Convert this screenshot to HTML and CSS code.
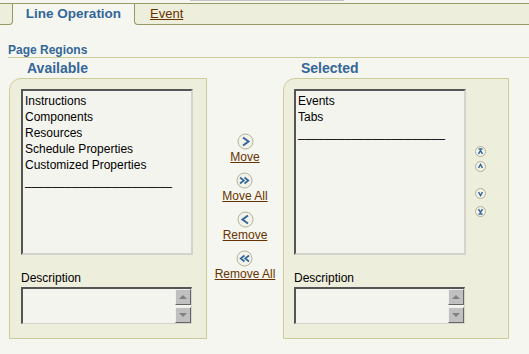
FILE: index.html
```html
<!DOCTYPE html>
<html lang="en">
<head>
    <meta charset="UTF-8">
    <meta name="viewport" content="width=device-width, initial-scale=1.0">
    <title>Line Operation</title>
    <link rel="stylesheet" href="styles.css">
</head>
<body>
    <div class="topline"></div>
    <div class="tabbar">
        <div class="tab-edge"></div>
        <div class="tab tab-active">Line Operation</div>
        <div class="tab tab-rest"><a href="#">Event</a></div>
    </div>

    <div class="content">
        <h2 class="section-title">Page Regions</h2>

        <div class="shuttle">
            <div class="side">
                <h3>Available</h3>
                <div class="panel panel-left">
                    <div class="list-col">
                        <div class="listbox">
                            <div>Instructions</div>
                            <div>Components</div>
                            <div>Resources</div>
                            <div>Schedule Properties</div>
                            <div>Customized Properties</div>
                            <div>______________________</div>
                        </div>
                        <div class="desc-label">Description</div>
                        <div class="desc">
                            <div class="scroll">
                                <span class="sb"><span class="tri-up"></span></span>
                                <span class="sb"><span class="tri-down"></span></span>
                            </div>
                        </div>
                    </div>
                </div>
            </div>

            <div class="moves">
                <div class="move-item">
                    <svg width="17" height="17" viewBox="0 0 17 17"><circle cx="8.5" cy="8.5" r="7.5" class="ring"/><path d="M6 4.5 L11.5 8.5 L6 12.5" class="chev"/></svg>
                    <a href="#">Move</a>
                </div>
                <div class="move-item">
                    <svg width="17" height="17" viewBox="0 0 17 17"><circle cx="8.5" cy="8.5" r="7.5" class="ring"/><path d="M4 5.5 L7.8 8.5 L4 11.5 M8.5 5.5 L12.3 8.5 L8.5 11.5" class="chev thin"/></svg>
                    <a href="#">Move All</a>
                </div>
                <div class="move-item">
                    <svg width="17" height="17" viewBox="0 0 17 17"><circle cx="8.5" cy="8.5" r="7.5" class="ring"/><path d="M11 4.5 L5.5 8.5 L11 12.5" class="chev"/></svg>
                    <a href="#">Remove</a>
                </div>
                <div class="move-item">
                    <svg width="17" height="17" viewBox="0 0 17 17"><circle cx="8.5" cy="8.5" r="7.5" class="ring"/><path d="M8.5 5.5 L4.7 8.5 L8.5 11.5 M13 5.5 L9.2 8.5 L13 11.5" class="chev thin"/></svg>
                    <a href="#">Remove All</a>
                </div>
            </div>

            <div class="side">
                <h3>Selected</h3>
                <div class="panel panel-right">
                    <div class="list-col">
                        <div class="listbox">
                            <div>Events</div>
                            <div>Tabs</div>
                            <div>______________________</div>
                        </div>
                        <div class="desc-label">Description</div>
                        <div class="desc">
                            <div class="scroll">
                                <span class="sb"><span class="tri-up"></span></span>
                                <span class="sb"><span class="tri-down"></span></span>
                            </div>
                        </div>
                    </div>
                    <div class="order">
                        <svg class="o-top" width="11" height="11" viewBox="0 0 11 11"><circle cx="5.5" cy="5.5" r="5" class="ring"/><path d="M3.5 3 H7.5 M3.5 7.8 L5.5 4.6 L7.5 7.8" class="chev fine"/></svg>
                        <svg class="o-up" width="11" height="11" viewBox="0 0 11 11"><circle cx="5.5" cy="5.5" r="5" class="ring"/><path d="M3.5 7 L5.5 3.5 L7.5 7" class="chev fine"/></svg>
                        <svg class="o-down" width="11" height="11" viewBox="0 0 11 11"><circle cx="5.5" cy="5.5" r="5" class="ring"/><path d="M3.5 4 L5.5 7.5 L7.5 4" class="chev fine"/></svg>
                        <svg class="o-bottom" width="11" height="11" viewBox="0 0 11 11"><circle cx="5.5" cy="5.5" r="5" class="ring"/><path d="M3.5 3.2 L5.5 6.4 L7.5 3.2 M3.5 8 H7.5" class="chev fine"/></svg>
                    </div>
                </div>
            </div>
        </div>
    </div>
</body>
</html>
```

FILE: styles.css
```css
* {
    box-sizing: border-box;
}
body {
    margin: 0;
    font-family: "Liberation Sans", Arial, sans-serif;
    font-size: 12px;
    background-color: #f6f6f0;
    color: #000;
}
a {
    color: #663300;
    text-decoration: underline;
}
.topline {
    margin-left: 190px;
    width: 154px;
    height: 1px;
    background-color: #c4c4c0;
    margin-bottom: 2px;
}
.tabbar {
    display: flex;
    height: 22px;
}
.tab-edge {
    width: 13px;
    background-color: #eeeedc;
    border: 1px solid #999966;
    border-left: none;
    border-bottom-right-radius: 4px;
}
.tab {
    line-height: 20px;
    font-size: 13px;
}
.tab-active {
    width: 121px;
    border-top: 1px solid #999966;
    text-align: center;
    font-weight: bold;
    color: #336699;
    font-size: 13.5px;
}
.tab-rest {
    flex: 1;
    background-color: #eeeedc;
    border: 1px solid #999966;
    border-right: none;
    border-bottom-left-radius: 4px;
    padding-left: 15px;
}
.content {
    padding-left: 8px;
}
.section-title {
    margin: 18px 0 0 0;
    font-size: 12px;
    line-height: 14px;
    font-weight: bold;
    color: #336699;
    border-bottom: 1px solid #cccc99;
}
.shuttle {
    display: flex;
    padding-left: 1px;
}
.side h3 {
    margin: 2px 0 2px 18px;
    font-size: 14px;
    line-height: 16px;
    color: #336699;
}
.panel {
    display: flex;
    background-color: #eeeedc;
    border: 1px solid #cccc99;
    border-top-left-radius: 12px;
    padding: 10px 0 14px 11px;
}
.panel-left {
    width: 198px;
}
.panel-right {
    width: 226px;
    padding-left: 10px;
}
.list-col {
    width: 172px;
}
.listbox {
    height: 166px;
    background-color: #f4f4ef;
    border-top: 2px solid #555;
    border-left: 2px solid #555;
    border-right: 2px solid #d4d4cc;
    border-bottom: 2px solid #d4d4cc;
    padding: 2px 0 0 2px;
    line-height: 16px;
}
.desc-label {
    margin-top: 15px;
    line-height: 16px;
    margin-bottom: 1px;
}
.desc {
    display: flex;
    justify-content: flex-end;
    width: 171px;
    height: 37px;
    background-color: #f4f4ef;
    border-top: 2px solid #555;
    border-left: 2px solid #555;
    border-right: 1px solid #d4d4cc;
    border-bottom: 1px solid #d4d4cc;
}
.scroll {
    display: flex;
    flex-direction: column;
    gap: 2px;
}
.sb {
    display: flex;
    align-items: center;
    justify-content: center;
    width: 16px;
    height: 16px;
    background-color: #c0c0c0;
    border-top: 1px solid #eee;
    border-left: 1px solid #eee;
    border-right: 1px solid #666;
    border-bottom: 1px solid #666;
}
.tri-up {
    border-left: 4px solid transparent;
    border-right: 4px solid transparent;
    border-bottom: 4px solid #808080;
}
.tri-down {
    border-left: 4px solid transparent;
    border-right: 4px solid transparent;
    border-top: 4px solid #808080;
}
.moves {
    width: 76px;
    padding-top: 75px;
    display: flex;
    flex-direction: column;
    align-items: center;
}
.move-item {
    display: flex;
    flex-direction: column;
    align-items: center;
    margin-bottom: 7px;
    line-height: 15px;
}
.move-item svg {
    display: block;
}
.ring {
    fill: #f3f3ea;
    stroke: #b0b09a;
    stroke-width: 1;
}
.chev {
    fill: none;
    stroke: #336699;
    stroke-width: 2;
}
.chev.thin {
    stroke-width: 1.7;
}
.chev.fine {
    stroke-width: 1.5;
}
.order {
    display: flex;
    flex-direction: column;
    padding: 57px 0 0 9px;
}
.order svg {
    display: block;
}
.o-up {
    margin-top: 4px;
}
.o-down {
    margin-top: 16px;
}
.o-bottom {
    margin-top: 7px;
}
```
